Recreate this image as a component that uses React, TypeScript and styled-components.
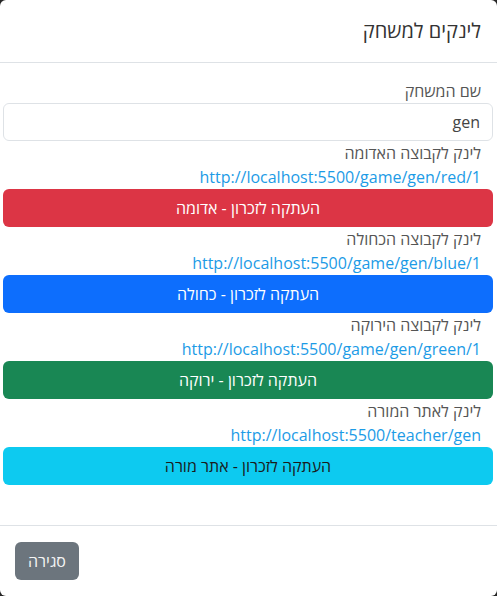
import React from "react";
import styled, { createGlobalStyle } from "styled-components";

const Global = createGlobalStyle`
  html, body { margin: 0; padding: 0; background: #262626; }
  body { font-family: "Open Sans", "DejaVu Sans", sans-serif; }
  * { box-sizing: border-box; }
`;

const Modal = styled.div`
  direction: rtl;
  width: 497px;
  background: #fff;
  border-radius: 6px;
  overflow: hidden;
  font-family: "Open Sans", "DejaVu Sans", sans-serif;
  color: #212529;
`;

const Header = styled.div`
  padding: 16px;
  border-bottom: 1px solid #dee2e6;
`;

const Title = styled.h5`
  margin: 0;
  font-size: 20px;
  font-weight: 400;
  line-height: 30px;
  color: #333;
`;

const Body = styled.div`
  padding: 16px 4px 40px 3px;
  display: flex;
  flex-direction: column;
`;

const Label = styled.div`
  padding: 0 12px;
  font-size: 16px;
  line-height: 24px;
  color: #555;
`;

const LinkText = styled.a`
  display: block;
  padding: 0 12px;
  font-size: 16px;
  line-height: 24px;
  color: #1c9be6;
  text-decoration: none;
  direction: ltr;
  text-align: right;
`;

const Input = styled.input`
  display: block;
  width: 100%;
  height: 38px;
  padding: 6px 12px;
  font-family: inherit;
  font-size: 16px;
  line-height: 24px;
  color: #444;
  background: #fff;
  border: 1px solid #dee2e6;
  border-radius: 6px;
  direction: rtl;
  outline: none;
`;

const tones = {
  red: { bg: "#dc3545", fg: "#fff" },
  blue: { bg: "#0d6efd", fg: "#fff" },
  green: { bg: "#198754", fg: "#fff" },
  cyan: { bg: "#0dcaf0", fg: "#1a1a1a" },
  gray: { bg: "#6c757d", fg: "#f4f4f4" },
};

type Tone = keyof typeof tones;

const Button = styled.button<{ $tone: Tone }>`
  display: block;
  width: 100%;
  height: 38px;
  padding: 6px 12px;
  border: none;
  border-radius: 6px;
  font-family: inherit;
  font-size: 16px;
  line-height: 24px;
  background: ${(p) => tones[p.$tone].bg};
  color: ${(p) => tones[p.$tone].fg};
  cursor: pointer;
`;

const Footer = styled.div`
  display: flex;
  justify-content: flex-end;
  padding: 12px;
  border-top: 1px solid #dee2e6;
`;

const CloseButton = styled(Button)`
  width: auto;
  margin: 4px 3px 4px 3px;
  padding: 6px 13px;
`;

const groups: { label: string; url: string; btn: string; tone: Tone }[] = [
  { label: "לינק לקבוצה האדומה", url: "http://localhost:5500/game/gen/red/1", btn: "העתקה לזכרון - אדומה", tone: "red" },
  { label: "לינק לקבוצה הכחולה", url: "http://localhost:5500/game/gen/blue/1", btn: "העתקה לזכרון - כחולה", tone: "blue" },
  { label: "לינק לקבוצה הירוקה", url: "http://localhost:5500/game/gen/green/1", btn: "העתקה לזכרון - ירוקה", tone: "green" },
  { label: "לינק לאתר המורה", url: "http://localhost:5500/teacher/gen", btn: "העתקה לזכרון - אתר מורה", tone: "cyan" },
];

export default function App() {
  return (
    <>
      <Global />
      <Modal>
        <Header>
          <Title>לינקים למשחק</Title>
        </Header>
        <Body>
          <Label>שם המשחק</Label>
          <Input defaultValue="gen" />
          {groups.map((g) => (
            <React.Fragment key={g.tone}>
              <Label>{g.label}</Label>
              <LinkText href={g.url}>{g.url}</LinkText>
              <Button $tone={g.tone}>{g.btn}</Button>
            </React.Fragment>
          ))}
        </Body>
        <Footer>
          <CloseButton $tone="gray">סגירה</CloseButton>
        </Footer>
      </Modal>
    </>
  );
}
